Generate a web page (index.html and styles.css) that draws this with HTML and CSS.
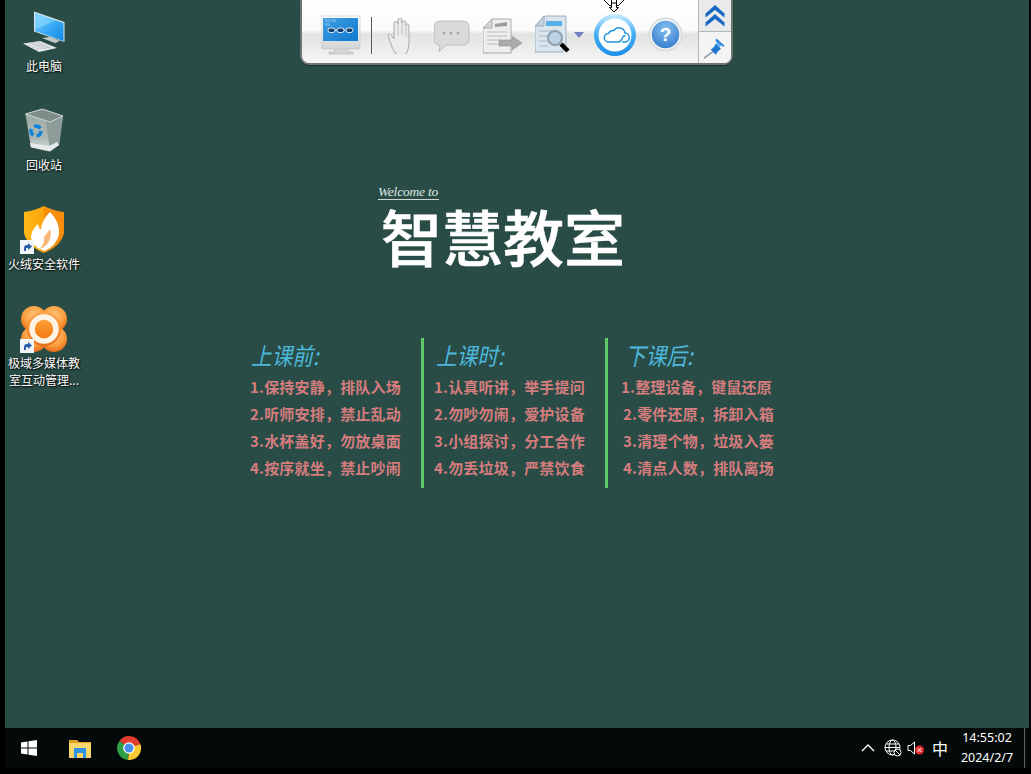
FILE: index.html
```html
<!DOCTYPE html>
<html lang="zh-CN">
<head>
<meta charset="utf-8">
<title>智慧教室</title>
<link rel="stylesheet" href="styles.css">
</head>
<body>
<div class="screen">
  <main class="desktop">
    <section class="icons">
      <div class="cell">
        <div class="icon-box">
          <svg class="icon" viewBox="20 8 48 48">
            <defs><linearGradient id="scr" x1="0" y1="0" x2="1" y2="1"><stop offset="0" stop-color="#79d0ff"/><stop offset=".55" stop-color="#36a9f5"/><stop offset="1" stop-color="#1188e0"/></linearGradient></defs>
            <path d="M42 38l8-1 10 4-5 2z" fill="#c3cbcc"/>
            <path d="M34 11.500l30.500 10.500v20l-30.500-10.500z" fill="#dfe5e8"/>
            <path d="M35 13l28.500 10v18l-28.500-10z" fill="url(#scr)"/>
            <path d="M35 13l21 7.500-21 9z" fill="#8fdcff" opacity=".55"/>
            <path d="M23 43.500l17-2.500 17 7-18 4z" fill="#e6e9ea"/>
            <path d="M27 43.500l13-2M29 45.500l14-2M32 47.500l15-2.500M35 49.500l15-2.500M31 42.800l16 6.500M36 42l15 6.400" stroke="#aab2b4" stroke-width=".5" fill="none"/>
          </svg>
        </div>
        <div class="label">此电脑</div>
      </div>
      <div class="cell">
        <div class="icon-box">
          <svg class="icon" viewBox="20 107 48 48">
            <defs><linearGradient id="bin" x1="0" y1="0" x2="0" y2="1"><stop offset="0" stop-color="#9aa9a4"/><stop offset=".7" stop-color="#aeb9b6"/><stop offset="1" stop-color="#dde2e1"/></linearGradient></defs>
            <path d="M25.500 114l5.500 33.500 19 4 9-6.500 4-29-21-7z" fill="url(#bin)"/>
            <path d="M46 121.500l4 29.500 9-6 4-29z" fill="#8d9c98"/>
            <path d="M25.500 114l17-5 20.500 7-13 6z" fill="#7e8d88" stroke="#cdd5d3"/>
            <path d="M31 147l19 4 9-6-2-3-8 4-19-3z" fill="#e6eaea"/>
            <circle cx="36" cy="131" r="5" fill="none" stroke="#0b84dc" stroke-width="3.600" stroke-dasharray="7 3.500"/>
          </svg>
        </div>
        <div class="label">回收站</div>
      </div>
      <div class="cell">
        <div class="icon-box">
          <svg class="icon" viewBox="20 206 48 48">
            <defs><linearGradient id="shd" x1="0" y1="0" x2="1" y2="0"><stop offset="0" stop-color="#fdb913"/><stop offset=".5" stop-color="#fca50f"/><stop offset=".5" stop-color="#f78f0c"/><stop offset="1" stop-color="#f68c0c"/></linearGradient></defs>
            <path d="M24 212q10-1 20-6 10 5 20 6v21q-3 13-20 20-17-7-20-20z" fill="url(#shd)"/>
            <path d="M50 212q10 10 9 22-2 11-14 17-12-3-14-13 0-8 7-14 1 6 3 5 1-9 9-17z" fill="#fff"/>
            <path d="M50 229q2 8-2 14-3 4-8 6 5-6 4-12z" fill="#f9b476"/>
          </svg>
          <svg class="shortcut" viewBox="0 0 14 14"><rect width="14" height="14" fill="#f2f5f8"/><path d="M4 11V8q0-3 3-3h1V3l4 3.500-4 3.500V8H7q-1 0-1 1v2z" fill="#2b5fb0"/></svg>
        </div>
        <div class="label">火绒安全软件</div>
      </div>
      <div class="cell">
        <div class="icon-box">
          <svg class="icon" viewBox="20 305 48 48">
            <defs><radialGradient id="flw" cx=".5" cy=".35" r=".7"><stop offset="0" stop-color="#ffc47a"/><stop offset=".6" stop-color="#fb9a3a"/><stop offset="1" stop-color="#dc5f12"/></radialGradient><linearGradient id="core" x1="0" y1="0" x2="0" y2="1"><stop offset="0" stop-color="#ffa53d"/><stop offset="1" stop-color="#f57210"/></linearGradient></defs>
            <g fill="url(#flw)"><circle cx="34" cy="319" r="13"/><circle cx="54" cy="319" r="13"/><circle cx="34" cy="339" r="13"/><circle cx="54" cy="339" r="13"/><circle cx="44" cy="329" r="17"/></g>
            <circle cx="44" cy="329" r="12" fill="url(#core)" stroke="#fff3e6" stroke-width="5.500"/>
          </svg>
          <svg class="shortcut" viewBox="0 0 14 14"><rect width="14" height="14" fill="#f2f5f8"/><path d="M4 11V8q0-3 3-3h1V3l4 3.500-4 3.500V8H7q-1 0-1 1v2z" fill="#2b5fb0"/></svg>
        </div>
        <div class="label">极域多媒体教室互动管理...</div>
      </div>
    </section>

    <section class="poster">
      <div class="welcome">Welcome to</div>
      <h1 class="title">智慧教室</h1>
      <div class="columns">
        <div class="col col-a">
          <h2 class="head">上课前:</h2>
          <ul class="rules">
            <li>1.保持安静，排队入场</li>
            <li>2.听师安排，禁止乱动</li>
            <li>3.水杯盖好，勿放桌面</li>
            <li>4.按序就坐，禁止吵闹</li>
          </ul>
        </div>
        <div class="col col-b">
          <h2 class="head">上课时:</h2>
          <ul class="rules">
            <li>1.认真听讲，举手提问</li>
            <li>2.勿吵勿闹，爱护设备</li>
            <li>3.小组探讨，分工合作</li>
            <li>4.勿丢垃圾，严禁饮食</li>
          </ul>
        </div>
        <div class="col col-c">
          <h2 class="head">下课后:</h2>
          <ul class="rules">
            <li class="first">1.整理设备，键鼠还原</li>
            <li>2.零件还原，拆卸入箱</li>
            <li>3.清理个物，垃圾入篓</li>
            <li>4.清点人数，排队离场</li>
          </ul>
        </div>
      </div>
    </section>

    <nav class="toolbar">
      <div class="tools">
        <svg class="t-monitor" viewBox="321 15 40 40">
          <defs><linearGradient id="mscr" x1="0" y1="0" x2="1" y2="1"><stop offset="0" stop-color="#3f9fe0"/><stop offset="1" stop-color="#0f78d0"/></linearGradient><linearGradient id="mbody" x1="0" y1="0" x2="0" y2="1"><stop offset="0" stop-color="#fff"/><stop offset="1" stop-color="#d2d5d6"/></linearGradient></defs>
          <path d="M347 48h-12l-1 4h-5v2h24v-2h-5z" fill="#d4d6d7" stroke="#aaa" stroke-width=".5"/>
          <rect x="321" y="16" width="39" height="33" rx="1.500" fill="url(#mbody)" stroke="#c0c4c6" stroke-width=".6"/>
          <rect x="323" y="18" width="35" height="23" fill="url(#mscr)"/>
          <path d="M325 19h5v3h-5zM331 19h5v3h-5zM325 23h5v3h-5z" fill="#7cb8e4" opacity=".6"/>
          <rect x="328" y="28" width="7" height="4.500" rx="2.200" fill="#0c3f73" stroke="#e8eef3" stroke-width="1"/><rect x="337" y="28" width="7" height="4.500" rx="2.200" fill="#0c3f73" stroke="#e8eef3" stroke-width="1"/><rect x="346" y="28" width="7" height="4.500" rx="2.200" fill="#0c3f73" stroke="#e8eef3" stroke-width="1"/>
          <path d="M335 30h2M344 30h2" stroke="#e8eef3"/>
        </svg>
        <i class="t-sep"></i>
        <svg class="t-hand" viewBox="388 18 26 36">
          <path d="M395 52q-3-3-4-8l-3-8q0-3 3-1l3 4V24q0-2.500 2-2.500t2 2.500v-4q0-2 2-2t2 2v3q0-2 2-2t2 2.500v2q0-1.500 1.500-1.500t1.500 2.500v15q0 7-2 11-1 2-3 2h-5q-2 0-4-1z" fill="#ececec" stroke="#a9a9a9" stroke-width="1"/>
          <path d="M398 22v14M402 21v14M406 24v13" stroke="#b7b7b7" stroke-width=".8"/>
        </svg>
        <svg class="t-chat" viewBox="434 20 36 34">
          <path d="M441 21h22q6 0 6 6v12q0 6-6 6h-17l-7 7 1-7q-6 0-6-6V27q0-6 7-6z" fill="#d9dad9" stroke="#bcbebd"/>
          <g fill="#a8a8a8"><circle cx="444" cy="33" r="1.500"/><circle cx="451" cy="33" r="1.500"/><circle cx="458" cy="33" r="1.500"/></g>
        </svg>
        <svg class="t-doc" viewBox="483 18 40 37">
          <path d="M492 19h19v34h-28V28z" fill="#eeeeee" stroke="#a9abab"/>
          <path d="M483 28h9v-9z" fill="#d5d6d6" stroke="#a9abab"/>
          <path d="M495 24l12-2v4l-12 1z" fill="#9a9b9b"/>
          <path d="M487 32h20M487 36h20M487 40h14M487 44h14" stroke="#b9baba"/>
          <path d="M499 40h13v-4l10 7-10 7v-4h-13z" fill="#a9aca8" stroke="#8e918d" stroke-width=".6"/>
        </svg>
        <svg class="t-search" viewBox="535 15 36 41">
          <path d="M545 16h21v30h-3v6h-28V26z" fill="#dbe5ee" stroke="#9cb0c2"/>
          <path d="M535 26h9V16z" fill="#c4d2de" stroke="#9cb0c2"/>
          <rect x="546" y="21" width="16" height="5" fill="#58aee6"/>
          <path d="M539 31h19M539 36h9M539 41h9M539 46h9" stroke="#aab8c4"/>
          <circle cx="555" cy="38" r="7" fill="#bcd5e4" stroke="#8ea0ae" stroke-width="2"/>
          <path d="M561 44l7 7" stroke="#000" stroke-width="4.500"/>
        </svg>
        <i class="t-caret"></i>
        <svg class="t-cloud" viewBox="594 14 42 42">
          <defs><linearGradient id="rng" x1="0" y1="0" x2="0" y2="1"><stop offset="0" stop-color="#cdeeff"/><stop offset=".45" stop-color="#45b0f4"/><stop offset="1" stop-color="#1f8fe8"/></linearGradient></defs>
          <circle cx="615" cy="35" r="21" fill="url(#rng)"/>
          <circle cx="615" cy="35" r="16.500" fill="#fff"/>
          <path d="M622 42h2.500a4.500 4.500 0 0 0 .5-9 6 6 0 0 0-11-2.500 5 5 0 0 0-5.500 3 4.200 4.200 0 0 0 0 8.500h9.500q3 0 4.500-4.500 1-2 3-2" fill="none" stroke="#2591df" stroke-width="1.500"/>
        </svg>
        <svg class="t-help" viewBox="648 17 35 35">
          <defs><radialGradient id="hlp" cx=".5" cy=".3" r=".8"><stop offset="0" stop-color="#84c0f0"/><stop offset="1" stop-color="#2a72c6"/></radialGradient></defs>
          <circle cx="665.500" cy="34.500" r="17" fill="#d9dcdd"/>
          <circle cx="665.500" cy="34.500" r="14.500" fill="url(#hlp)" stroke="#f6f6f6" stroke-width="1.500"/>
          <text x="665.500" y="41" text-anchor="middle" class="qmark">?</text>
        </svg>
      </div>
      <div class="side">
        <button class="side-btn">
          <svg viewBox="0 0 22 22" class="side-icon"><path d="M11 0l9.500 8.500v4L11 5 1.500 12.500v-4zM11 9l9.500 8.500v4L11 14l-9.500 7.500v-4z" fill="#1668c4"/></svg>
        </button>
        <button class="side-btn side-pin">
          <svg viewBox="0 0 26 26" class="side-icon"><path d="M0 25l11-8" stroke="#8b949c" stroke-width="1.500"/><path d="M8 15q4-2 6-7l6 6q-4 3-6 7z" fill="#1f78d0"/><path d="M14 3q0-1 1-1l9 8q0 2-2 1l-8-6z" fill="#1f78d0"/><path d="M16 5l5 5-3 2-4-4z" fill="#5db0ee"/></svg>
        </button>
      </div>
    </nav>
    <svg class="cursor" viewBox="0 0 22 13">
      <path d="M1 0l5 5V0h10v5l5-5h0l-6 8h-1l-3 4-3-4H7z" fill="#fff"/>
      <path d="M1 0l5.500 5.500h2V0M21 0l-5.500 5.500h-2V0M8.500 5.500v2H6.500L11 12l4.500-4.500h-2v-2M8.500 3h5" fill="none" stroke="#000"/>
    </svg>
  </main>

  <footer class="taskbar">
    <div class="task-left">
      <svg class="win" viewBox="0 0 16 16"><path d="M0 2.500l6.500-1V7.500H0zM7.500 1.300L16 0v7.500H7.500zM0 8.500h6.500v6L0 13.500zM7.500 8.500H16V16l-8.500-1.300z" fill="#fff"/></svg>
      <svg class="folder" viewBox="0 0 22 19"><path d="M0 1h8l2 2h12v15H0z" fill="#e0a020"/><path d="M0 4h22v15H0z" fill="#fbd46b"/><path d="M5 9h12v10h-3v-5H8v5H5z" fill="#2b93e0"/></svg>
      <svg class="chrome" viewBox="0 0 24 24">
        <path d="M12 12L2.400 5A12 12 0 0 1 23.400 8z" fill="#e33b2e"/>
        <path d="M12 12l11.400-4A12 12 0 0 1 11 24z" fill="#fcc934"/>
        <path d="M12 12l-1 12A12 12 0 0 1 2.400 5z" fill="#2f9e45"/>
        <circle cx="12" cy="12" r="5.800" fill="#fff"/><circle cx="12" cy="12" r="4.500" fill="#4a8ff0"/>
      </svg>
    </div>
    <div class="tray">
      <svg class="chev" viewBox="0 0 14 8"><path d="M1 7l6-6 6 6" fill="none" stroke="#fff" stroke-width="1.300"/></svg>
      <svg class="globe" viewBox="0 0 18 18">
        <g fill="none" stroke="#fff" stroke-width="1"><circle cx="8.500" cy="8.500" r="7.500"/><ellipse cx="8.500" cy="8.500" rx="3.500" ry="7.500"/><path d="M1 8.500h15M2 5h13M2 12h13"/></g>
        <circle cx="13.500" cy="13.500" r="3.500" fill="#040a0a" stroke="#fff"/><path d="M11 11l5 5" stroke="#fff"/>
      </svg>
      <svg class="speaker" viewBox="0 0 18 14">
        <path d="M1 4.500h2.500l4-3.500v12l-4-3.500H1z" fill="none" stroke="#fff"/>
        <circle cx="12.500" cy="9" r="4.500" fill="#e02a2a"/><path d="M10.500 7l4 4M14.500 7l-4 4" stroke="#fff"/>
      </svg>
      <span class="ime">中</span>
      <div class="clock"><span>14:55:02</span><span>2024/2/7</span></div>
      <i class="show-desktop"></i>
    </div>
  </footer>
</div>
</body>
</html>
```
FILE: styles.css
```css
* { box-sizing: border-box; }
html, body { margin: 0; height: 100%; background: #000; overflow: hidden; }
body { padding: 0 2px 6px 5px; font-family: "Noto Sans CJK SC", "Noto Sans", sans-serif; }
ul, h1, h2 { margin: 0; padding: 0; }
button { padding: 0; border: 0; background: none; }

.screen { height: 768px; display: flex; flex-direction: column; }

/* desktop */
.desktop { position: relative; flex: 1; display: flex; background: #294d46; overflow: hidden; }
.icons { width: 78px; flex: none; padding-top: 8px; }
.cell { height: 99px; display: flex; flex-direction: column; align-items: center; }
.icon-box { position: relative; width: 48px; height: 48px; }
.icon { display: block; width: 48px; height: 48px; }
.shortcut { position: absolute; left: 0; top: 34px; width: 14px; height: 14px; }
.label { width: 74px; margin-top: 1px; color: #fff; font-size: 12px; line-height: 17px; text-align: center; text-shadow: 1px 1px 2px #000, 0 0 2px rgba(0,0,0,.6); }

/* wallpaper */
.poster { flex: 1; padding: 184px 0 0 167px; }
.welcome { margin-left: 128px; width: 61px; font-family: "Liberation Serif", serif; font-style: italic; font-size: 13.500px; line-height: 15px; letter-spacing: -.2px; color: #dfe6e3; border-bottom: 1px solid #cfd8d5; white-space: nowrap; }
.title { margin: 6px 0 0 131px; font-size: 61px; line-height: 60px; font-weight: 500; color: #fff; white-space: nowrap; -webkit-text-stroke: .6px #fff; }
.columns { display: flex; margin-top: 72px; height: 150px; }
.col { height: 150px; }
.col-a { width: 174px; border-right: 3px solid #5ecb68; }
.col-b { width: 184px; padding-left: 10px; border-right: 3px solid #5ecb68; }
.col-c { padding-left: 15px; }
.head { margin: 0 0 0 1px; height: 36px; font-size: 24px; line-height: 34px; font-weight: 400; font-style: italic; color: #4db8dc; white-space: nowrap; transform: scaleX(.86); transform-origin: left center; }
.col-b .head, .col-c .head { margin-left: 2px; }
.rules { list-style: none; margin-top: -1px; }
.rules li { height: 27px; font-size: 15px; line-height: 27px; font-weight: 700; letter-spacing: .2px; color: #d57c7e; white-space: nowrap; }
.rules .first { margin-left: -2px; }

/* floating toolbar */
.toolbar { position: absolute; left: 295px; top: -2px; width: 433px; height: 67px; display: flex; border: 2px solid #6e7674; border-radius: 0 0 9px 9px; background: linear-gradient(#fff 0, #fbfbfb 30px, #e2e4e2 34px, #f4f5f4 62px); box-shadow: 0 1px 1px #1a2f2b; }
.tools { flex: 1; display: flex; align-items: flex-start; padding: 15px 0 0 19px; }
.tools svg { display: block; flex: none; }
.t-monitor { width: 40px; height: 40px; }
.t-sep { width: 1px; height: 37px; margin: 2px 0 0 10px; background: #55595a; flex: none; }
.t-hand { width: 26px; height: 36px; margin: 3px 0 0 16px; }
.t-chat { width: 36px; height: 34px; margin: 5px 0 0 20px; }
.t-doc { width: 40px; height: 37px; margin: 3px 0 0 13px; }
.t-search { width: 36px; height: 41px; margin-left: 12px; }
.t-caret { width: 0; height: 0; margin: 17px 0 0 3px; border: 5px solid transparent; border-top: 6px solid #6f7fbf; border-bottom: 0; flex: none; }
.t-cloud { width: 42px; height: 42px; margin: -1px 0 0 10px; }
.t-help { width: 35px; height: 35px; margin: 2px 0 0 12px; }
.qmark { font: 700 19px "Liberation Sans", sans-serif; fill: #fff; }
.side { width: 33px; flex: none; display: flex; flex-direction: column; border-left: 1px solid #b4b7b6; }
.side-btn { height: 32px; display: flex; align-items: center; justify-content: center; background: #e9eaea; }
.side-pin { height: 33px; border-top: 1px solid #b4b7b6; background: #f3f4f3; border-bottom-right-radius: 7px; }
.side-icon { width: 22px; height: 22px; display: block; }
.cursor { position: absolute; left: 598px; top: 0; width: 22px; height: 13px; }

/* taskbar */
.taskbar { height: 40px; flex: none; display: flex; justify-content: space-between; background: #040a0a; }
.task-left { display: flex; align-items: center; padding-left: 16px; }
.win { width: 16px; height: 16px; }
.folder { width: 22px; height: 19px; margin-left: 32px; }
.chrome { width: 24px; height: 24px; margin-left: 26px; }
.tray { display: flex; align-items: center; }
.chev { width: 14px; height: 8px; }
.globe { width: 18px; height: 18px; margin-left: 9px; }
.speaker { width: 18px; height: 14px; margin-left: 5px; }
.ime { margin-left: 6px; width: 18px; color: #fff; font-size: 16px; line-height: 20px; text-align: center; }
.clock { width: 62px; margin-left: 7px; display: flex; flex-direction: column; align-items: center; color: #fff; font-family: "Noto Sans", sans-serif; font-size: 12.500px; line-height: 20px; }
.show-desktop { width: 1px; height: 40px; margin-left: 6px; margin-right: 4px; background: #5e6362; }
```
